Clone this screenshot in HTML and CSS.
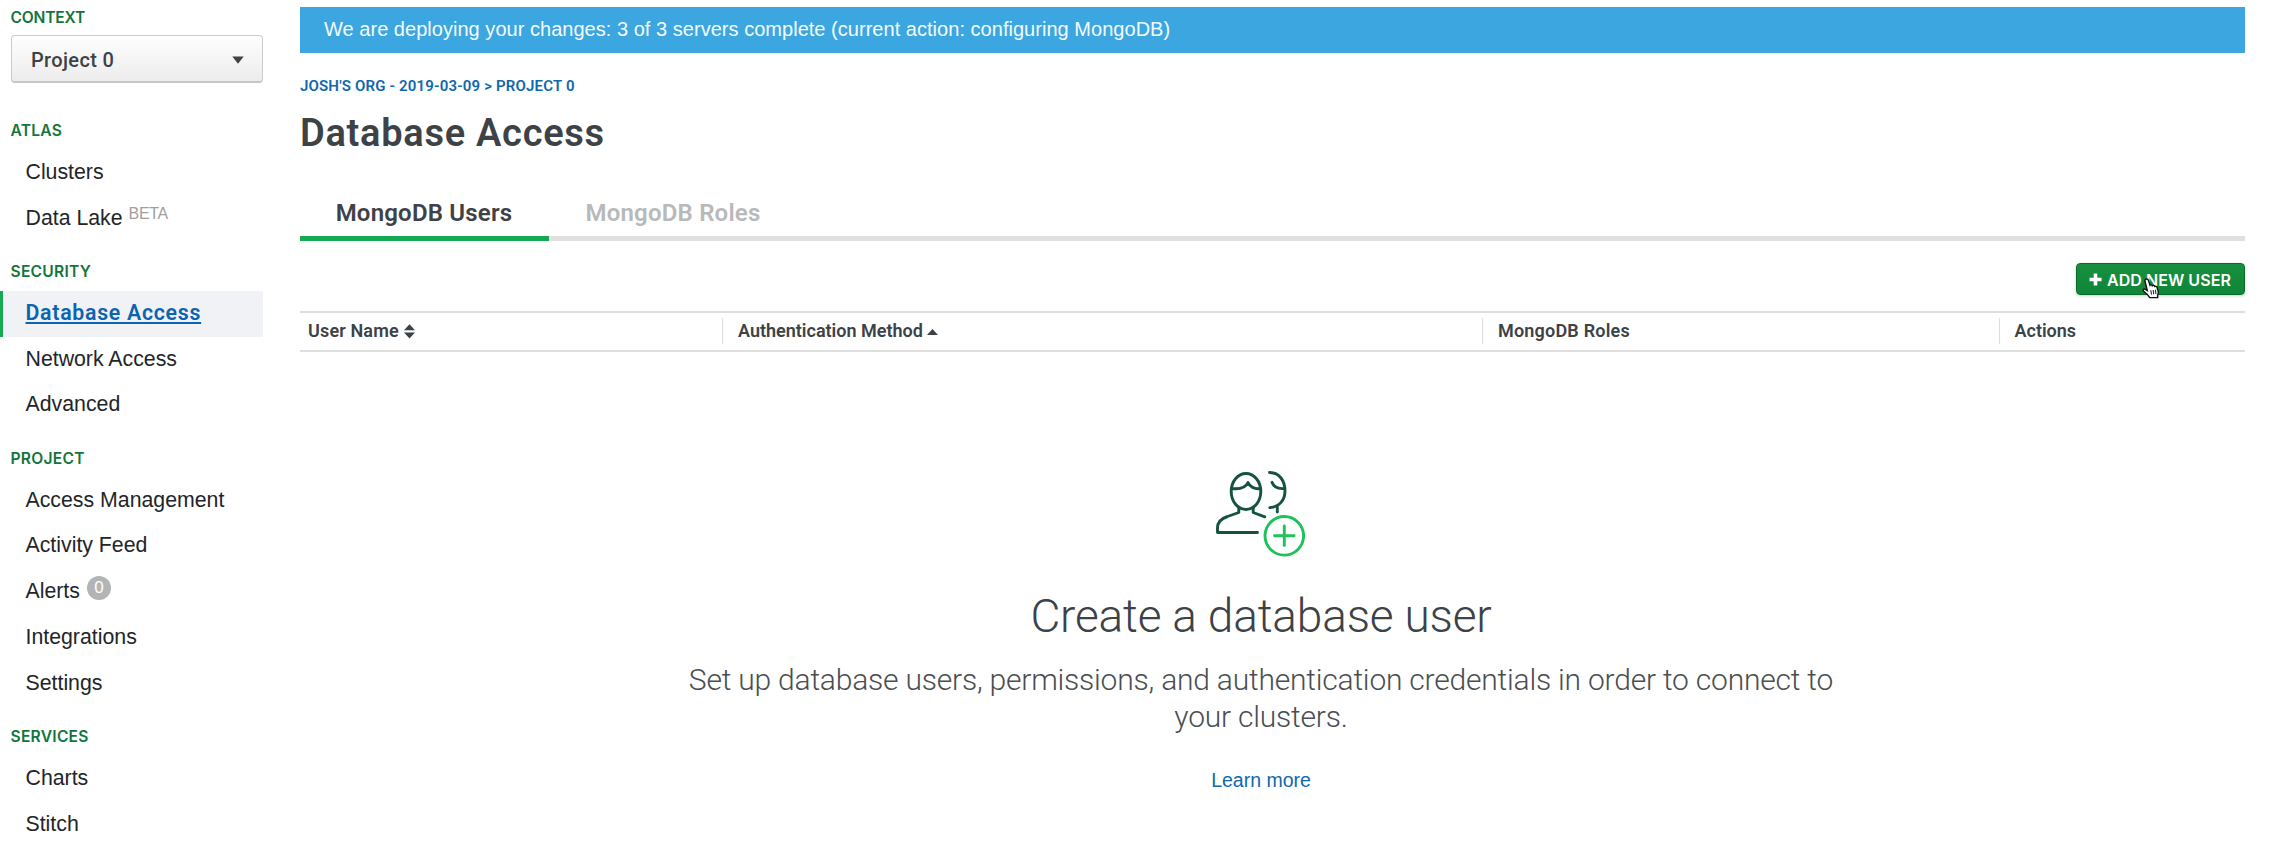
FILE: index.html
```html
<!DOCTYPE html>
<html lang="en">
<head>
<meta charset="utf-8">
<title>Database Access</title>
<link rel="stylesheet" href="styles.css">
</head>
<body>
<div class="app">
  <nav class="sidebar">
    <div class="context-label">CONTEXT</div>
    <button class="project-select"><span>Project 0</span><svg width="12" height="8" viewBox="0 0 12 8"><path d="M0.3 0.5H11.7L6 7.8Z" fill="#3d4247"/></svg></button>
    <h4 class="group">ATLAS</h4>
    <a class="item">Clusters</a>
    <a class="item">Data Lake<span class="beta">BETA</span></a>
    <h4 class="group">SECURITY</h4>
    <a class="item active"><span>Database Access</span></a>
    <a class="item">Network Access</a>
    <a class="item">Advanced</a>
    <h4 class="group">PROJECT</h4>
    <a class="item">Access Management</a>
    <a class="item">Activity Feed</a>
    <a class="item">Alerts<span class="count">0</span></a>
    <a class="item">Integrations</a>
    <a class="item">Settings</a>
    <h4 class="group">SERVICES</h4>
    <a class="item">Charts</a>
    <a class="item">Stitch</a>
  </nav>
  <main class="main">
    <div class="banner">We are deploying your changes: 3 of 3 servers complete (current action: configuring MongoDB)</div>
    <div class="breadcrumb">JOSH'S ORG - 2019-03-09 &gt; PROJECT 0</div>
    <h1 class="title">Database Access</h1>
    <div class="tabs">
      <a class="tab selected">MongoDB Users</a>
      <a class="tab">MongoDB Roles</a>
    </div>
    <div class="toolbar">
      <button class="add">
        <svg width="13" height="13" viewBox="0 0 13 13"><path d="M6.5 0.5V12.5M0.5 6.5H12.5" stroke="#fff" stroke-width="3.6"/></svg>
        <span>ADD NEW USER</span>
        <svg class="cursor" width="18" height="21" viewBox="0 0 18 21"><path d="M4.200 1.200C5.200 .8 6 1.300 6.400 2.300L8 7.300C8.600 6.600 9.900 6.700 10.300 7.700C11 7 12.300 7.200 12.700 8.400C13.500 7.900 14.800 8.300 15.100 9.500L16.200 13.200C16.600 15 16 16.400 15.600 17.400L15.700 19.600H7.800C6.500 17.600 4.400 15.400 1.700 13.300C.5 12.200 1.600 10.700 3 11.200L5.300 12.600L3 3.200C2.700 2.200 3.300 1.500 4.200 1.200Z" fill="#fff" stroke="#111" stroke-width="1.400"/><path d="M8.800 12.200L9.500 16.500M11.200 12L11.700 16.300M13.500 11.800L13.900 16" stroke="#111" stroke-width="1"/></svg>
      </button>
    </div>
    <div class="thead">
      <div class="th user">User Name<svg width="11" height="15" viewBox="0 0 10 15" preserveAspectRatio="none"><path d="M5 0.300L10 6.300H0ZM0 8.500H10L5 14.500Z" fill="#3d4247"/></svg></div>
      <div class="th auth">Authentication Method<svg class="asc" width="11" height="6" viewBox="0 0 11 6"><path d="M5.500 0L11 6H0Z" fill="#3d4247"/></svg></div>
      <div class="th roles">MongoDB Roles</div>
      <div class="th actions">Actions</div>
    </div>
    <section class="empty">
      <svg class="people" width="90" height="88" viewBox="0 0 90 88" fill="none">
        <g stroke="#13533f" stroke-width="2.900" stroke-linecap="round" stroke-linejoin="round">
          <ellipse cx="31" cy="20.500" rx="14.800" ry="18"/>
          <path d="M16.500 17.500C24 18.500 30.500 17 33 11.500C34.500 15.500 39.500 18.500 45.500 17.500"/>
          <path d="M23.800 36.500V41.500L12.500 45.500C6 47.600 2.500 51 2.500 57V61.500H42.500"/>
          <path d="M38.200 36.500V41.500L49.800 45.800"/>
          <path d="M54.500 1.500C64.500 1.500 70 10 70 20C70 29.500 64 36 54.800 36.600"/>
          <path d="M57 11.300C58.500 15.500 63 18.200 69.500 17.500"/>
          <path d="M62.300 36V41"/>
        </g>
        <g stroke="#1fc15b" stroke-width="2.900" stroke-linecap="round">
          <circle cx="69.300" cy="64.800" r="19.300"/>
          <path d="M69.300 55V74.600M59.500 64.800H79.100"/>
        </g>
      </svg>
      <h2 class="headline">Create a database user</h2>
      <p class="copy">Set up database users, permissions, and authentication credentials in order to connect to your clusters.</p>
      <a class="learn">Learn more</a>
    </section>
  </main>
</div>
</body>
</html>
```
FILE: styles.css
```css
* { box-sizing: border-box; }
body { margin: 0; background: #fff; color: #222528; font-family: "Liberation Sans", Arial, sans-serif; }
h1, h2, h4, p { margin: 0; }
button { font: inherit; }

.app { display: flex; height: 845px; overflow: hidden; }

.sidebar { width: 263px; flex: none; }
.context-label, .group { font: 600 15.6px/20px Inter, sans-serif; color: #13753a; padding-left: 10.500px; letter-spacing: 0.250px; }
.context-label { padding-top: 7.500px; letter-spacing: -0.200px; }
.project-select {
  display: flex; align-items: center; justify-content: space-between;
  width: 252px; height: 48px; margin: 7.500px 0 17.700px 11px; padding: 3px 18px 0 19px;
  border: 1px solid #cbcbcb; border-bottom: 2px solid #c6c6c6; border-radius: 4px;
  background: linear-gradient(#fefefe, #ececec);
  color: #3d4247; font: 500 20px Roboto, sans-serif; letter-spacing: 0.350px;
}
.group { height: 49.400px; padding-top: 20.700px; }
.item {
  display: flex; height: 45.750px; padding-left: 25.500px;
  font-size: 21.300px; line-height: 45.500px; color: #222528;
}
.item.active {
  padding-left: 22.500px; border-left: 3px solid #13aa52; background: #f0f2f5;
  color: #0b64b0; font: 600 21.300px/43.500px Roboto, sans-serif; letter-spacing: 0.720px;
}
.item.active span { text-decoration: underline; text-decoration-thickness: 2px; text-underline-offset: 2px; }
.beta { margin-left: 6px; font-size: 16px; line-height: 36px; letter-spacing: -0.300px; color: #a0a0a0; }
.count {
  width: 24px; height: 24px; margin: 6.500px 0 0 7px; border-radius: 50%;
  background: #b3b4b4; color: #fff; font-size: 17px; line-height: 24px; text-align: center;
}

.main { flex: 1; padding: 7px 29px 0 37px; }
.banner { height: 46px; padding-left: 24px; background: #3ba6df; color: #f3fbff; font-size: 20px; line-height: 44px; letter-spacing: 0.030px; }
.breadcrumb { margin-top: 23.400px; color: #0f68ab; font: 600 15px/20px Roboto, sans-serif; letter-spacing: 0.170px; }
.title { margin-top: 13.600px; color: #3d4247; font: 600 38px/46px Roboto, sans-serif; letter-spacing: 0.720px; }

.tabs { display: flex; margin-top: 41.800px; box-shadow: inset 0 -5px #e0e0e0; }
.tab { width: 249px; height: 43.200px; padding-right: 1px; border-bottom: 5px solid transparent; color: #b8b9ba; font: 600 24px/30px Roboto, sans-serif; letter-spacing: 0.200px; text-align: center; }
.tab.selected { border-bottom-color: #13aa52; color: #3d4247; }

.toolbar { display: flex; justify-content: flex-end; margin: 22.500px 0 15.500px; }
.add {
  position: relative; display: flex; align-items: center; gap: 5px;
  width: 169px; height: 32px; padding: 1px 0 0 12px; border: 1px solid #0c6b2c; border-radius: 4px;
  background: linear-gradient(#17903f, #0f8638); box-shadow: 0 1px 3px rgba(0, 80, 30, .25);
  color: #fff; font: 600 16px Inter, sans-serif; letter-spacing: 0.050px; white-space: nowrap;
}
.cursor { position: absolute; left: 65px; top: 14px; }

.thead { display: flex; align-items: center; height: 41px; border-top: 2px solid #dedede; border-bottom: 2px solid #dedede; color: #3d4247; font: 600 18px/26px Roboto, sans-serif; }
.th { display: flex; align-items: center; height: 26px; padding-left: 15px; border-left: 1.500px solid #dedede; }
.th svg { margin-left: 5px; }
.th .asc { margin-top: 1px; margin-left: 4px; }
.user { width: 422px; padding-left: 8px; border-left: 0; letter-spacing: 0.150px; }
.auth { width: 760px; }
.roles { width: 516.500px; letter-spacing: 0.200px; }
.actions { flex: 1; }

.empty { display: flex; flex-direction: column; align-items: center; padding: 119px 23px 0 0; text-align: center; }
.people { position: relative; left: -1px; }
.headline { margin-top: 29.500px; color: #3d4247; font: 300 46px/56px Roboto, sans-serif; letter-spacing: -0.180px; }
.copy { width: 1180px; margin-top: 17px; color: #4a4e51; font: 300 30px/37px Roboto, sans-serif; letter-spacing: -0.210px; }
.learn { margin-top: 33px; color: #0f68ab; font-size: 19.500px; line-height: 24px; }
```
